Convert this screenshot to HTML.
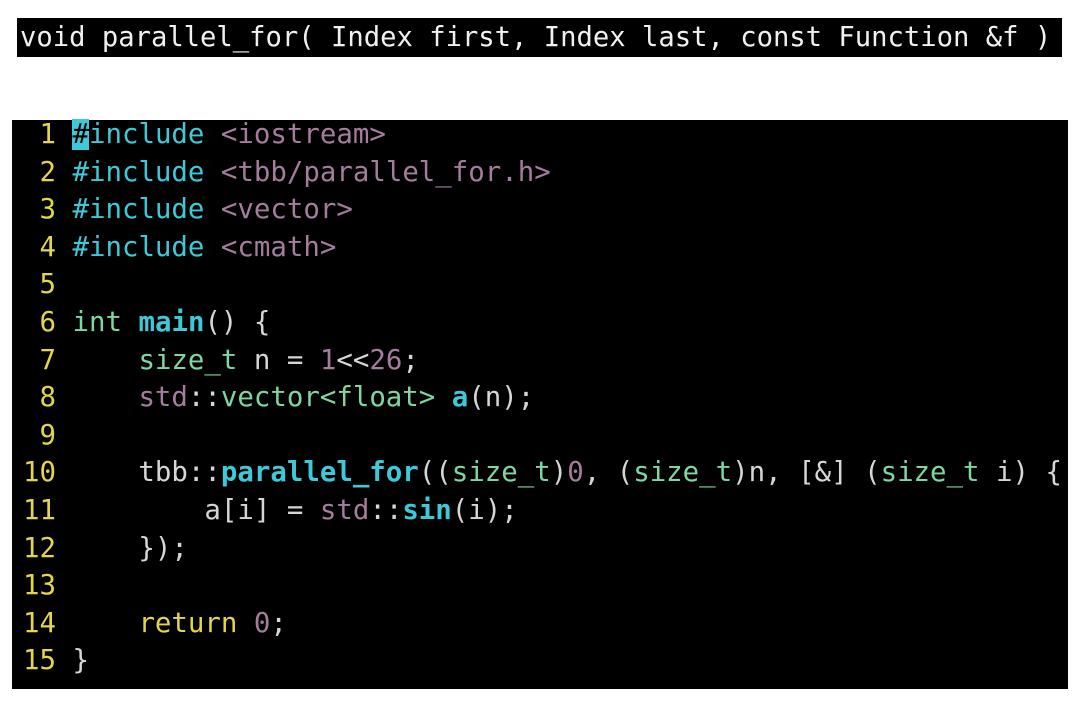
<!DOCTYPE html>
<html><head><style>
body{margin:0;width:1085px;height:708px;background:#fff;position:relative;overflow:hidden;font-family:"DejaVu Sans Mono","Liberation Mono",monospace;}
.bar{position:absolute;left:17px;top:18px;width:1045px;height:39px;background:#000;color:#f0f0f0;font-size:27.2px;line-height:39px;white-space:pre;padding-left:3px;box-sizing:border-box;}
.box{position:absolute;left:12px;top:120px;width:1056px;height:569px;background:#000;}
.code{position:absolute;left:23px;top:116px;font-size:27.4px;line-height:37.6px;white-space:pre;color:#d6d6d6;}
.n{color:#e3d54c}.c{color:#3ec8d8}.s{color:#a47c9c}.g{color:#7fd6a0}.b{color:#3ec8d8;font-weight:bold}.y{color:#e3d54c}
.cur{background:#3ec8d8;color:#000}
.ptr{font-size:14px;color:#ddd}
</style></head><body>
<div class="bar">void parallel_for( Index first, Index last, const Function &amp;f )</div>
<div class="box"></div>
<div class="code"><span class="n"> 1</span> <span class="cur">#</span><span class="c">include</span> <span class="s">&lt;iostream&gt;</span>
<span class="n"> 2</span> <span class="c">#include</span> <span class="s">&lt;tbb/parallel_for.h&gt;</span>
<span class="n"> 3</span> <span class="c">#include</span> <span class="s">&lt;vector&gt;</span>
<span class="n"> 4</span> <span class="c">#include</span> <span class="s">&lt;cmath&gt;</span>
<span class="n"> 5</span>
<span class="n"> 6</span> <span class="g">int</span> <span class="b">main</span>() {
<span class="n"> 7</span>     <span class="g">size_t</span> n = <span class="s">1</span>&lt;&lt;<span class="s">26</span>;
<span class="n"> 8</span>     <span class="s">std</span>::<span class="g">vector&lt;float&gt;</span> <span class="b">a</span>(n);
<span class="n"> 9</span>
<span class="n">10</span>     tbb::<span class="b">parallel_for</span>((<span class="g">size_t</span>)<span class="s">0</span>, (<span class="g">size_t</span>)n, [&amp;] (<span class="g">size_t</span> i) {
<span class="n">11</span>         a[i] = <span class="s">std</span>::<span class="b">sin</span>(i);
<span class="n">12</span>     });
<span class="n">13</span>
<span class="n">14</span>     <span class="y">return</span> <span class="s">0</span>;
<span class="n">15</span> }</div>
</body></html>
